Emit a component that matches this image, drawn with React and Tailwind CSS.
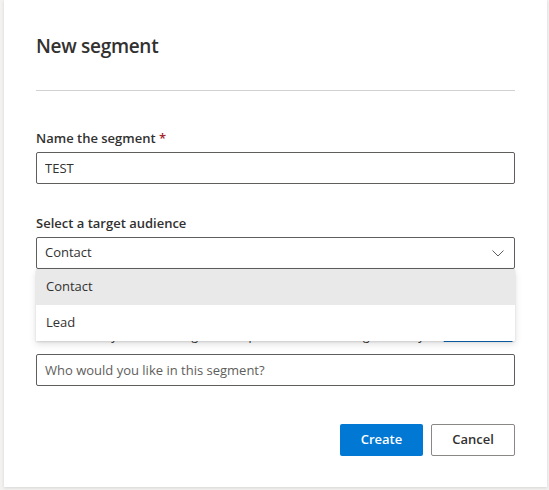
import { useState } from 'react'

const FONT = { fontFamily: '"Segoe UI", "Open Sans", "Noto Sans", sans-serif' }

function Chevron() {
  return (
    <svg width="12" height="7" viewBox="0 0 12 7" fill="none">
      <path d="M0.5 0.5 L6 6 L11.5 0.5" stroke="#605e5c" strokeWidth="1" />
    </svg>
  )
}

export default function App() {
  const [audience, setAudience] = useState('Contact')
  const [name, setName] = useState('TEST')
  const options = ['Contact', 'Lead']

  return (
    <div className="h-[490px] w-full bg-[#f3f2f1] pl-1" style={FONT}>
      <div className="w-[543px] h-[487px] bg-white shadow-[0_1px_3px_rgba(0,0,0,0.12)] px-8 pt-8 text-[#323130]">
        <h1 className="text-[19px] leading-[28px] font-semibold tracking-[-0.3px]">New segment</h1>
        <div className="mt-[30px] h-px bg-[#d1d1d1]" />

        {/* Name */}
        <div className="mt-[37px]">
          <label className="block text-[13px] leading-5 font-semibold">
            Name the segment <span className="text-[#a4262c]">*</span>
          </label>
          <input
            value={name}
            onChange={e => setName(e.target.value)}
            className="mt-1 block w-full h-8 border border-[#605e5c] rounded-[2px] px-2 text-[13px] text-[#323130] outline-none"
          />
        </div>

        {/* Audience */}
        <div className="mt-[29px] relative">
          <label className="block text-[13px] leading-5 font-semibold">Select a target audience</label>
          <div className="mt-1 relative">
            <div className="h-8 border border-[#605e5c] rounded-[2px] px-2 flex items-center justify-between text-[13px]">
              <span>{audience}</span>
              <span className="mr-[2px]"><Chevron /></span>
            </div>
            <div className="absolute left-0 right-0 top-full z-10 bg-white shadow-[0_3.2px_7.2px_rgba(0,0,0,0.13),0_0.6px_1.8px_rgba(0,0,0,0.11)]">
              {options.map(o => (
                <div
                  key={o}
                  onClick={() => setAudience(o)}
                  className={`h-9 flex items-center px-[10px] text-[13px] cursor-pointer ${o === audience ? 'bg-[#e9e9e9]' : 'bg-white'}`}
                >
                  {o}
                </div>
              ))}
            </div>
          </div>
        </div>

        {/* Describe (mostly covered by the open dropdown) */}
        <div className="mt-[29px]">
          <div className="h-5" />
          <p className="mt-[8px] text-[12px] leading-5 tracking-[-0.3px] whitespace-nowrap">
            Describe who you want to target and Copilot will create the segment for you.{' '}
            <a className="text-[#0f6cbd] underline">How it works</a>
          </p>
          <input
            placeholder="Who would you like in this segment?"
            className="mt-[8px] block w-full h-8 border border-[#605e5c] rounded-[2px] px-2 text-[13px] placeholder:text-[#605e5c] outline-none"
          />
        </div>

        <div className="mt-[38px] flex justify-end gap-2">
          <button className="w-[83px] h-8 rounded-[2px] bg-[#0078d4] text-white text-[13px] font-semibold">Create</button>
          <button className="w-[84px] h-8 rounded-[2px] bg-white border border-[#8a8886] text-[#323130] text-[13px] font-semibold">Cancel</button>
        </div>
      </div>
    </div>
  )
}
